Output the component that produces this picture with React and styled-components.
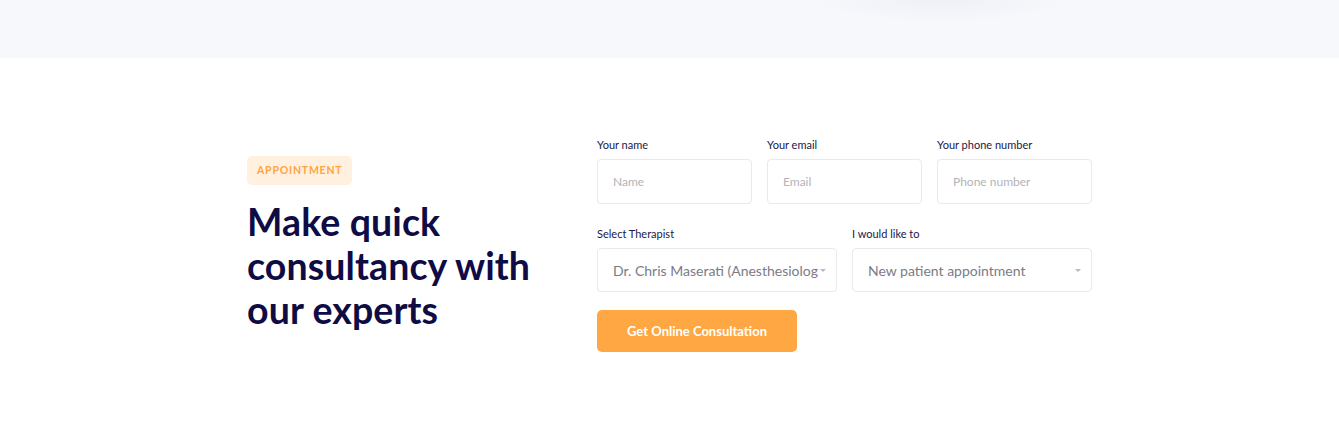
import styled, { createGlobalStyle } from "styled-components";

const GlobalStyle = createGlobalStyle`
  html, body { margin: 0; padding: 0; background: #fff; }
  body { font-family: "Lato", "Noto Sans", sans-serif; }
  * { box-sizing: border-box; }
`;

function App() {
  return (
    <>
      <GlobalStyle />
      <TopBand />
      <Section>
        <Container>
          <Intro>
            <Badge>Appointment</Badge>
            <Heading>Make quick consultancy with our experts</Heading>
          </Intro>
          <Form onSubmit={(e) => e.preventDefault()}>
            <Row $cols="1fr 1fr 1fr">
              <Field>
                <Label>Your name</Label>
                <Input placeholder="Name" />
              </Field>
              <Field>
                <Label>Your email</Label>
                <Input placeholder="Email" />
              </Field>
              <Field>
                <Label>Your phone number</Label>
                <Input placeholder="Phone number" />
              </Field>
            </Row>
            <Row $cols="1fr 1fr">
              <Field>
                <Label>Select Therapist</Label>
                <SelectBox>
                  <SelectText>Dr. Chris Maserati (Anesthesiologist)</SelectText>
                  <Caret />
                </SelectBox>
              </Field>
              <Field>
                <Label>I would like to</Label>
                <SelectBox>
                  <SelectText>New patient appointment</SelectText>
                  <Caret />
                </SelectBox>
              </Field>
            </Row>
            <Button type="submit">Get Online Consultation</Button>
          </Form>
        </Container>
      </Section>
    </>
  );
}

const TopBand = styled.div`
  height: 58px;
  background:
    radial-gradient(ellipse 125px 22px at 940px 0px, rgba(228, 232, 242, 0.5), rgba(247, 248, 252, 0) 100%),
    #f7f8fc;
`;

const Section = styled.section`
  padding: 80px 0 60px;
`;

const Container = styled.div`
  width: 845px;
  margin: 0 auto;
  display: flex;
  align-items: flex-start;
`;

const Intro = styled.div`
  width: 350px;
  flex-shrink: 0;
  padding-top: 18px;
`;

const Badge = styled.span`
  display: inline-block;
  height: 29px;
  line-height: 29px;
  padding: 0 10px;
  border-radius: 5px;
  background: #fff0df;
  color: #ffa43f;
  font-size: 10.5px;
  font-weight: 700;
  letter-spacing: 0.8px;
  text-transform: uppercase;
`;

const Heading = styled.h2`
  margin: 15px 0 0;
  color: #0f0b45;
  font-size: 37.5px;
  line-height: 44px;
  font-weight: 700;
  letter-spacing: 0.1px;
  max-width: 300px;
`;

const Form = styled.form`
  width: 495px;
  display: flex;
  flex-direction: column;
  gap: 23px;
  align-items: flex-start;
`;

const Row = styled.div`
  width: 100%;
  display: grid;
  grid-template-columns: ${(p) => p.$cols};
  column-gap: 15px;
`;

const Field = styled.div`
  display: flex;
  flex-direction: column;
  min-width: 0;
`;

const Label = styled.label`
  font-size: 11px;
  line-height: 14px;
  color: #1b1746;
  margin-bottom: 7px;
`;

const Input = styled.input`
  height: 45px;
  width: 100%;
  border: 1px solid #e9e9ee;
  border-radius: 4px;
  padding: 0 15px;
  font-family: inherit;
  font-size: 12px;
  color: #333;
  outline: none;
  &::placeholder { color: #b3b3b8; }
`;

const SelectBox = styled.div`
  height: 44px;
  border: 1px solid #e9e9ee;
  border-radius: 4px;
  padding: 0 10px 0 15px;
  display: flex;
  align-items: center;
  gap: 2px;
`;

const SelectText = styled.span`
  flex: 1;
  min-width: 0;
  overflow: hidden;
  white-space: nowrap;
  font-size: 14px;
  color: #7b7b86;
`;

const Caret = styled.span`
  width: 0;
  height: 0;
  border-left: 3px solid transparent;
  border-right: 3px solid transparent;
  border-top: 3px solid #b9b9be;
  flex-shrink: 0;
`;

const Button = styled.button`
  width: 200px;
  height: 42px;
  margin-top: -5px;
  border: none;
  border-radius: 5px;
  background: #ffa742;
  color: #fff;
  font-family: inherit;
  font-size: 13px;
  font-weight: 700;
  cursor: pointer;
`;

export default App;
